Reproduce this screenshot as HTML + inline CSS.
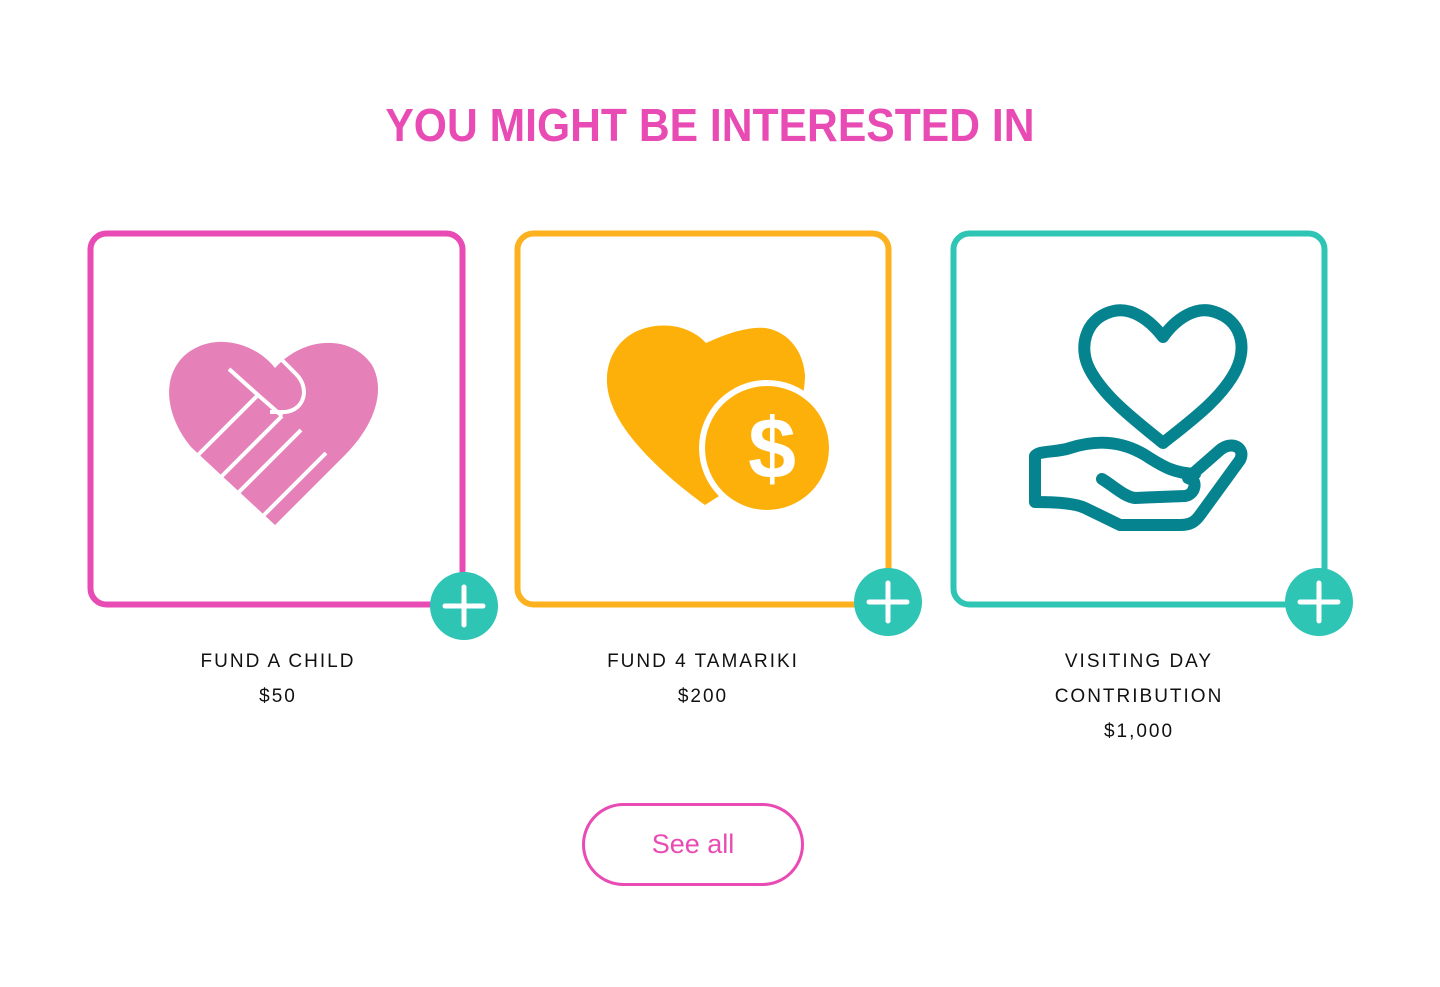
<!DOCTYPE html>
<html><head><meta charset="utf-8"><style>
html,body{margin:0;padding:0;background:#fff;width:1440px;height:987px;overflow:hidden;position:relative;font-family:"Liberation Sans",sans-serif}
.title{position:absolute;left:0;width:1420px;top:98px;text-align:center;color:#e84bb3;font-family:"Liberation Sans",sans-serif;font-weight:bold;font-size:46px;letter-spacing:0px;transform:scaleX(0.927);transform-origin:709px 0}
.lbl{position:absolute;width:360px;text-align:center;font-size:19px;letter-spacing:2px;line-height:35px;color:#111}
.btn{position:absolute;left:582px;top:803px;width:216px;height:77px;border:3px solid #e84bb3;border-radius:42px;color:#e84bb3;font-size:27px;text-align:center;line-height:77px}
</style></head><body>
<div class="title">YOU MIGHT BE INTERESTED IN</div>
<svg width="1440" height="987" style="position:absolute;left:0;top:0">
 <rect x="90.5" y="233.5" width="372" height="371" rx="16" fill="none" stroke="#e84bb3" stroke-width="6"/>
 <rect x="517.5" y="233.5" width="371" height="371" rx="16" fill="none" stroke="#fdb11f" stroke-width="6"/>
 <rect x="953.5" y="233.5" width="371" height="371" rx="16" fill="none" stroke="#2fc5b5" stroke-width="6"/>
 <path d="M275 368 C255 342 210 330 182 358 C160 382 168 420 192 448 L275 525 L345 455 C375 425 386 390 372 365 C352 335 305 335 275 368 Z" fill="#e680b8"/>
 <path d="M229 369 L258 395 M258 395 L196 457 M258 395 L282 416 M301 430 L236 495 M326 453 L262 517 M282 416 L218 480" stroke="#fff" stroke-width="4" fill="none"/>
 <path d="M280 358 L296 374 C310 388 305 410 285 412 L270 412" stroke="#fff" stroke-width="4" fill="none"/>
 <path d="M196 457 C188 470 195 482 207 478 M218 480 C212 494 222 506 234 498 M240 503 C235 515 245 528 258 518" stroke="#fff" stroke-width="3" fill="none"/>
 <path d="M706 343 C690 325 660 320 635 332 C610 345 600 375 612 405 C625 440 670 480 705 505 L760 470 C785 440 805 410 805 375 C803 345 780 325 755 328 C735 330 720 337 706 343 Z" fill="#fdb00a"/>
 <circle cx="767" cy="448" r="68" fill="#fff"/>
 <circle cx="767" cy="448" r="62" fill="#fdb00a"/>
 <text x="772" y="478" text-anchor="middle" font-family="Liberation Sans" font-weight="bold" font-size="86" fill="#fff">$</text>
 <g fill="none" stroke="#05838f" stroke-width="12" stroke-linejoin="round" stroke-linecap="round">
  <path d="M1163 337 C1150 320 1130 305 1110 312 C1085 320 1078 348 1090 370 C1105 398 1135 420 1163 443 C1192 420 1222 398 1236 370 C1248 345 1240 320 1215 312 C1195 305 1175 320 1163 337 Z"/>
  <path d="M1035 456 C1040 450 1055 453 1070 448 C1095 440 1120 440 1145 455 C1165 468 1175 473 1195 474 L1188 478 L1220 450 C1232 440 1246 448 1240 460 L1200 515 C1195 522 1190 525 1180 525 L1120 525 L1085 508 C1075 503 1055 502 1035 502 Z"/>
  <path d="M1102 479 C1115 487 1125 497 1135 498 L1185 496 C1195 495 1198 480 1190 479"/>
 </g>
 <g fill="#2fc5b5"><circle cx="464" cy="606" r="34"/><circle cx="888" cy="602" r="34"/><circle cx="1319" cy="602" r="34"/></g>
 <g stroke="#fff" stroke-width="5" stroke-linecap="round">
  <path d="M445 606 H483 M464 587 V625"/><path d="M869 602 H907 M888 583 V621"/><path d="M1300 602 H1338 M1319 583 V621"/>
 </g>
</svg>
<div class="lbl" style="left:98px;top:644px">FUND A CHILD<br>$50</div>
<div class="lbl" style="left:523px;top:644px">FUND 4 TAMARIKI<br>$200</div>
<div class="lbl" style="left:959px;top:644px">VISITING DAY<br>CONTRIBUTION<br>$1,000</div>
<div class="btn">See all</div>
</body></html>
